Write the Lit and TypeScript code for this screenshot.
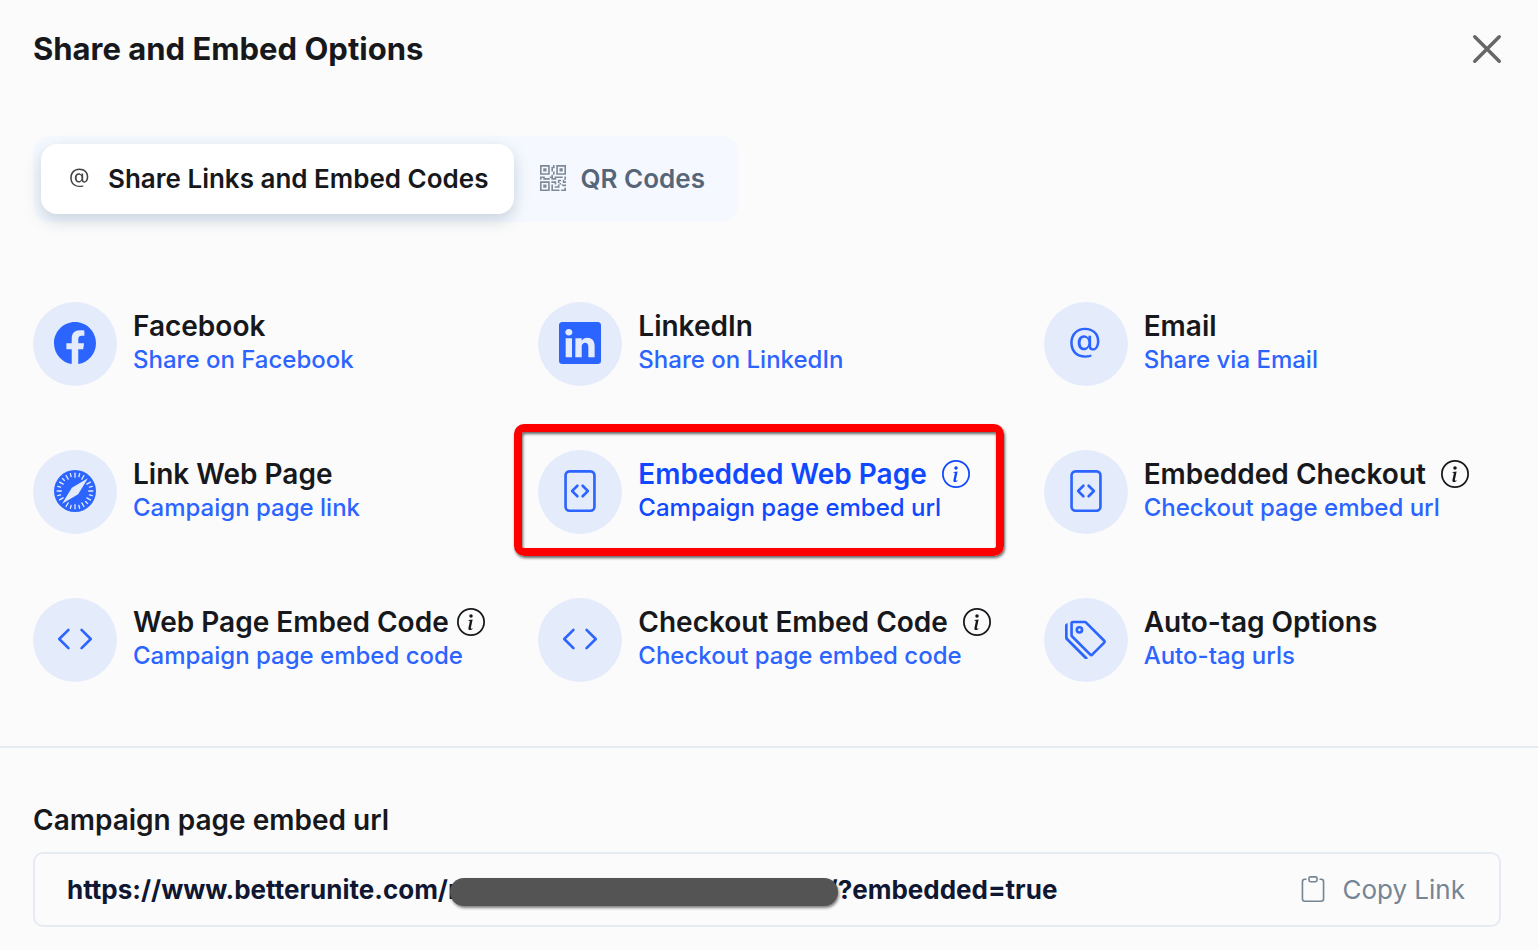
import { LitElement, html, css, svg, nothing, SVGTemplateResult } from "lit";
import { customElement, property, state } from "lit/decorators.js";
import { classMap } from "lit/directives/class-map.js";

const compassTicks = Array.from({ length: 24 }, (_, i) => i * 15)
  .filter((a) => a !== 45 && a !== 225)
  .map((a) => svg`<path d=${a % 30 === 0 ? "M8 1.2v1.6" : "M8 1.2v1.1"} transform="rotate(${a} 8 8)"/>`);

const glyphs: Record<string, SVGTemplateResult> = {
  facebook: svg`<path d="M16 8.049c0-4.446-3.582-8.05-8-8.05C3.58 0-.002 3.603-.002 8.05c0 4.017 2.926 7.347 6.75 7.951v-5.625h-2.03V8.05H6.75V6.275c0-2.017 1.195-3.131 3.022-3.131.876 0 1.791.157 1.791.157v1.98h-1.009c-.993 0-1.303.621-1.303 1.258v1.51h2.218l-.354 2.326H9.25V16c3.824-.604 6.75-3.934 6.75-7.951"/>`,
  linkedin: svg`<path d="M0 1.146C0 .513.526 0 1.175 0h13.65C15.474 0 16 .513 16 1.146v13.708c0 .633-.526 1.146-1.175 1.146H1.175C.526 16 0 15.487 0 14.854zm4.943 12.248V6.169H2.542v7.225zm-1.2-8.212c.837 0 1.358-.554 1.358-1.248-.015-.709-.52-1.248-1.342-1.248S2.4 3.226 2.4 3.934c0 .694.521 1.248 1.327 1.248zm4.908 8.212V9.359c0-.216.016-.432.08-.586.173-.431.568-.878 1.232-.878.869 0 1.216.662 1.216 1.634v3.865h2.401V9.25c0-2.22-1.184-3.252-2.764-3.252-1.274 0-1.845.7-2.165 1.193v.025h-.016l.016-.025V6.169h-2.4c.03.678 0 7.225 0 7.225z"/>`,
  at: svg`<path d="M13.106 7.222c0-2.967-2.249-5.032-5.482-5.032-3.35 0-5.646 2.318-5.646 5.702 0 3.493 2.235 5.708 5.762 5.708.862 0 1.689-.123 2.304-.335v-.862c-.43.199-1.354.328-2.29.328-2.926 0-4.813-1.88-4.813-4.798 0-2.844 1.921-4.881 4.594-4.881 2.735 0 4.608 1.688 4.608 4.156 0 1.682-.554 2.769-1.416 2.769-.492 0-.772-.28-.772-.76V5.206H8.923v.834h-.11c-.266-.595-.881-.964-1.6-.964-1.4 0-2.378 1.162-2.378 2.823 0 1.737.957 2.906 2.379 2.906.8 0 1.415-.39 1.709-1.087h.11c.081.67.703 1.148 1.503 1.148 1.572 0 2.57-1.415 2.57-3.643zm-7.177.704c0-1.197.54-1.907 1.456-1.907.93 0 1.524.738 1.524 1.907S8.308 9.84 7.371 9.84c-.895 0-1.442-.725-1.442-1.914"/>`,
  compass: svg`<circle cx="8" cy="8" r="8"/><g stroke="#e4ebfb" stroke-width=".5" stroke-linecap="round">${compassTicks}</g><path fill="#e4ebfb" d="M12.9 3.1 9.2 9.2 3.1 12.9 6.8 6.8z"/>`,
  file: svg`<path d="M6.646 5.646a.5.5 0 1 1 .708.708L5.707 8l1.647 1.646a.5.5 0 0 1-.708.708l-2-2a.5.5 0 0 1 0-.708zm2.708 0a.5.5 0 1 0-.708.708L10.293 8 8.646 9.646a.5.5 0 0 0 .708.708l2-2a.5.5 0 0 0 0-.708z"/><path d="M2 2a2 2 0 0 1 2-2h8a2 2 0 0 1 2 2v12a2 2 0 0 1-2 2H4a2 2 0 0 1-2-2zm10-1H4a1 1 0 0 0-1 1v12a1 1 0 0 0 1 1h8a1 1 0 0 0 1-1V2a1 1 0 0 0-1-1"/>`,
  code: svg`<path d="M5.854 4.854a.5.5 0 1 0-.708-.708l-3.5 3.5a.5.5 0 0 0 0 .708l3.5 3.5a.5.5 0 0 0 .708-.708L2.707 8zm4.292 0a.5.5 0 0 1 .708-.708l3.5 3.5a.5.5 0 0 1 0 .708l-3.5 3.5a.5.5 0 0 1-.708-.708L13.293 8z"/>`,
  tags: svg`<path d="M3 2v4.586l7 7L14.586 9l-7-7zM2 2a1 1 0 0 1 1-1h4.586a1 1 0 0 1 .707.293l7 7a1 1 0 0 1 0 1.414l-4.586 4.586a1 1 0 0 1-1.414 0l-7-7A1 1 0 0 1 2 6.586z"/><path d="M5.5 5a.5.5 0 1 1 0-1 .5.5 0 0 1 0 1m0 1a1.5 1.5 0 1 0 0-3 1.5 1.5 0 0 0 0 3M1 7.086a1 1 0 0 0 .293.707L8.75 15.25l-.043.043a1 1 0 0 1-1.414 0l-7-7A1 1 0 0 1 0 7.586V3a1 1 0 0 1 1-1z"/>`,
  info: svg`<path d="M8 15A7 7 0 1 1 8 1a7 7 0 0 1 0 14m0 1A8 8 0 1 0 8 0a8 8 0 0 0 0 16"/><path d="m8.93 6.588-2.29.287-.082.38.45.083c.294.07.352.176.288.469l-.738 3.468c-.194.897.105 1.319.808 1.319.545 0 1.178-.252 1.465-.598l.088-.416c-.2.176-.492.246-.686.246-.275 0-.375-.193-.304-.533zM9 4.5a1 1 0 1 1-2 0 1 1 0 0 1 2 0"/>`,
  qr: svg`<path d="M2 2h2v2H2z"/><path d="M6 0v6H0V0zM5 1H1v4h4zM4 12H2v2h2z"/><path d="M6 10v6H0v-6zm-5 1v4h4v-4zm11-9h2v2h-2z"/><path d="M10 0v6h6V0zm5 1v4h-4V1zM8 1V0h1v2H8v2H7V1zm0 5V4h1v2zM6 8V7h1V6h1v2h1V7h5v1h-4v1H7V8zm0 0v1H2V8H1v1H0V7h3v1zm10 1h-1V7h1zm-1 0h-1v2h2v-1h-1zm-4 0h2v1h-1v1h-1zm2 3v-1h-1v1h-1v1H9v1h3v-2zm0 0h3v1h-2zm-4-1v1h1v-2H7v1z"/><path d="M7 12h1v3h4v1H7zm9 2v2h-3v-1h2v-1z"/>`,
  clipboard: svg`<path d="M4 1.5H3a2 2 0 0 0-2 2V14a2 2 0 0 0 2 2h10a2 2 0 0 0 2-2V3.5a2 2 0 0 0-2-2h-1v1h1a1 1 0 0 1 1 1V14a1 1 0 0 1-1 1H3a1 1 0 0 1-1-1V3.5a1 1 0 0 1 1-1h1z"/><path d="M9.5 1a.5.5 0 0 1 .5.5v1a.5.5 0 0 1-.5.5h-3a.5.5 0 0 1-.5-.5v-1a.5.5 0 0 1 .5-.5zm-3-1A1.5 1.5 0 0 0 5 1.5v1A1.5 1.5 0 0 0 6.5 4h3A1.5 1.5 0 0 0 11 2.5v-1A1.5 1.5 0 0 0 9.5 0z"/>`,
  close: svg`<path d="M1 1 15 15M15 1 1 15" fill="none" stroke="currentColor" stroke-width="2" stroke-linecap="round"/>`,
};

@customElement("ui-icon")
class UiIcon extends LitElement {
  @property() name = "";
  static styles = css`
    :host { display: block; flex: none; width: 26px; height: 26px; }
    .glyph { display: block; width: 100%; height: 100%; fill: currentColor; overflow: visible; }
  `;
  render() {
    return html`<svg class="glyph" viewBox="0 0 16 16" aria-hidden="true">${glyphs[this.name]}</svg>`;
  }
}

interface ShareOption {
  icon: string;
  title: string;
  caption: string;
  info?: boolean;
}

const options: ShareOption[] = [
  { icon: "facebook", title: "Facebook", caption: "Share on Facebook" },
  { icon: "linkedin", title: "LinkedIn", caption: "Share on LinkedIn" },
  { icon: "at", title: "Email", caption: "Share via Email" },
  { icon: "compass", title: "Link Web Page", caption: "Campaign page link" },
  { icon: "file", title: "Embedded Web Page", caption: "Campaign page embed url", info: true },
  { icon: "file", title: "Embedded Checkout", caption: "Checkout page embed url", info: true },
  { icon: "code", title: "Web Page Embed Code", caption: "Campaign page embed code", info: true },
  { icon: "code", title: "Checkout Embed Code", caption: "Checkout page embed code", info: true },
  { icon: "tags", title: "Auto-tag Options", caption: "Auto-tag urls" },
];

@customElement("share-option")
class ShareOptionCard extends LitElement {
  @property({ attribute: false }) option!: ShareOption;
  @property({ type: Boolean, reflect: true }) selected = false;
  static styles = css`
    :host { display: block; position: relative; min-width: 0; }
    .card {
      display: flex; align-items: center; gap: 16px; width: 100%;
      padding: 0 5px 0 0; border: 0; background: none; cursor: pointer;
      font: inherit; text-align: left; color: #16181b;
    }
    .disc {
      flex: none; display: grid; place-items: center; width: 84px; height: 84px;
      padding-bottom: 2px; box-sizing: border-box; border-radius: 50%;
      background: #e4ebfb; color: #2c64ff;
    }
    .disc ui-icon { width: 42px; height: 42px; }
    .text { flex: 1; min-width: 0; padding-bottom: 2px; }
    .title { display: flex; align-items: center; font-size: 28px; line-height: 34px; font-weight: 600; white-space: nowrap; }
    .name { flex: none; }
    .info { flex: 0 1 43px; min-width: 28px; display: flex; justify-content: flex-end; }
    .info ui-icon { width: 28px; height: 28px; }
    .caption { display: block; font-size: 24px; line-height: 34px; font-weight: 500; color: #2c64ff; }
    :host([selected]) .title, :host([selected]) .caption { color: #1048ff; }
    .marker {
      position: absolute; inset: -26px -8px -22px -24px; pointer-events: none;
      border: 8px solid #ff0000; border-radius: 10px;
      box-shadow: 1px 2px 3px rgba(0, 0, 0, 0.6), inset 1px 2px 3px rgba(0, 0, 0, 0.6);
    }
  `;
  render() {
    const o = this.option;
    return html`
      <button class="card" type="button" aria-pressed=${this.selected ? "true" : "false"}>
        <span class="disc"><ui-icon name=${o.icon}></ui-icon></span>
        <span class="text">
          <span class="title">
            <span class="name">${o.title}</span>
            ${o.info ? html`<span class="info"><ui-icon name="info"></ui-icon></span>` : nothing}
          </span>
          <span class="caption">${o.caption}</span>
        </span>
      </button>
      ${this.selected ? html`<span class="marker"></span>` : nothing}
    `;
  }
}

@customElement("app-root")
class AppRoot extends LitElement {
  @state() private selected = 4;
  @state() private tab = 0;
  static styles = css`
    :host {
      display: block; min-height: 100vh; box-sizing: border-box;
      background: #fbfbfb; color: #16181b; font-family: Inter, "Liberation Sans", sans-serif;
    }
    button { font: inherit; color: inherit; border: 0; background: none; margin: 0; padding: 0; cursor: pointer; }
    .header, .tabs-row, .grid, .result { padding-left: 33px; padding-right: 37px; }
    .header { display: flex; align-items: center; justify-content: space-between; padding-top: 29px; }
    .heading { margin: 0; font-size: 31px; line-height: 40px; font-weight: 700; }
    .close { color: #666; }
    .close ui-icon { width: 28px; height: 28px; }
    .tabs-row { display: flex; padding-top: 67px; }
    .tabs { display: flex; padding: 8px; border-radius: 16px; background: #f5f9ff; }
    .tab {
      display: flex; align-items: center; gap: 15px; height: 70px; padding: 0 25px 0 26px; border-radius: 16px;
      font-size: 26px; line-height: 32px; font-weight: 600; color: #566679; white-space: nowrap;
    }
    .tab ui-icon, .copy ui-icon { margin-bottom: 2px; }
    .tab ui-icon { color: #7f8a99; }
    .tab.active { background: #fff; color: #16181b; box-shadow: 0 6px 16px rgba(60, 85, 110, 0.24); }
    .tab.active ui-icon { color: #444; }
    .grid { display: grid; grid-template-columns: repeat(3, minmax(0, 1fr)); gap: 64px 48px; padding-top: 80px; padding-bottom: 64px; }
    .result { border-top: 2px solid #e6eaf1; padding-top: 54px; padding-bottom: 23px; }
    .label { margin: 0 0 14px; font-size: 28px; line-height: 36px; font-weight: 600; }
    .field {
      display: flex; align-items: center; justify-content: space-between; min-height: 71px;
      padding: 0 34px 0 32px; border: 2px solid #e6eaf1; border-radius: 10px;
    }
    .url { display: flex; align-items: center; font-size: 26px; line-height: 32px; font-weight: 700; color: #0f1733; }
    .hidden-part {
      position: relative; width: 388px; height: 28px; margin: 4px -10px 0 -9px; border-radius: 14px; background: #545454;
      box-shadow: 1px 2px 3px rgba(0, 0, 0, 0.5);
    }
    .copy { display: flex; align-items: center; gap: 16px; font-size: 26px; line-height: 32px; font-weight: 400; color: #768594; }
  `;
  render() {
    const tabs = [
      { icon: "at", text: "Share Links and Embed Codes" },
      { icon: "qr", text: "QR Codes" },
    ];
    return html`
      <header class="header">
        <h1 class="heading">Share and Embed Options</h1>
        <button class="close" type="button" aria-label="Close"><ui-icon name="close"></ui-icon></button>
      </header>
      <div class="tabs-row">
        <div class="tabs" role="tablist">
          ${tabs.map(
            (t, i) => html`<button
              type="button"
              role="tab"
              aria-selected=${i === this.tab ? "true" : "false"}
              class=${classMap({ tab: true, active: i === this.tab })}
              @click=${() => (this.tab = i)}
            ><ui-icon name=${t.icon}></ui-icon><span>${t.text}</span></button>`
          )}
        </div>
      </div>
      <main class="grid">
        ${options.map(
          (o, i) => html`<share-option
            .option=${o}
            ?selected=${i === this.selected}
            @click=${() => (this.selected = i)}
          ></share-option>`
        )}
      </main>
      <section class="result">
        <h2 class="label">${options[this.selected].caption}</h2>
        <div class="field">
          <div class="url"><span>https://www.betterunite.com/r</span><span class="hidden-part"></span><span>/?embedded=true</span></div>
          <button class="copy" type="button"><ui-icon name="clipboard"></ui-icon><span>Copy Link</span></button>
        </div>
      </section>
    `;
  }
}
